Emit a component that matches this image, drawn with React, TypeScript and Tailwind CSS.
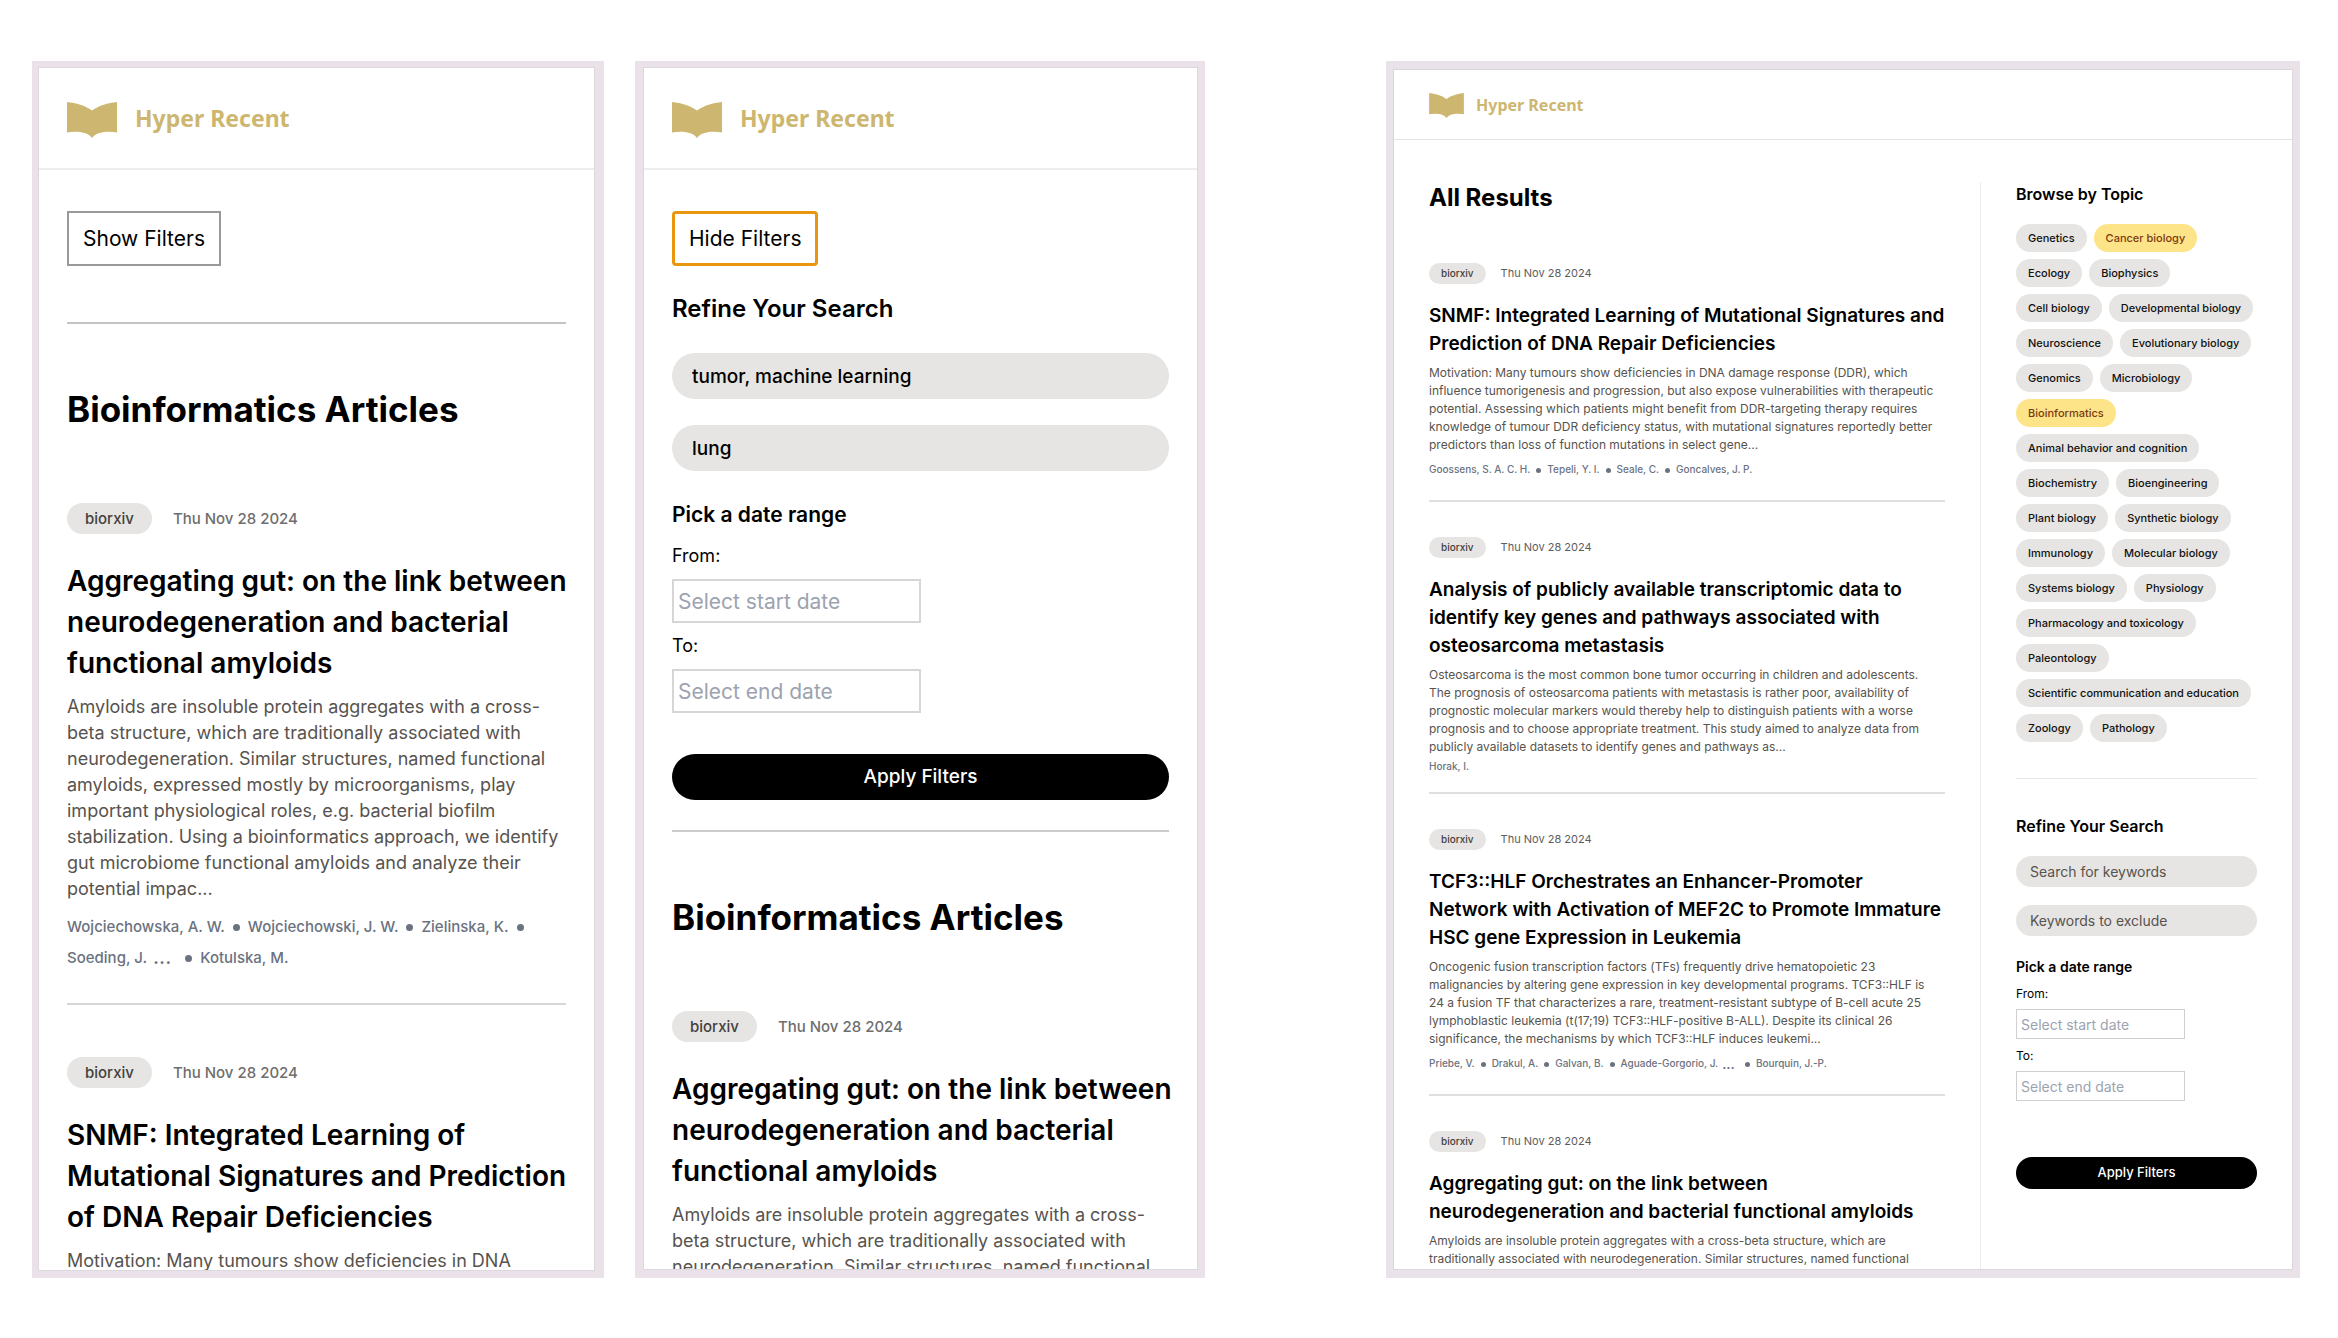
import React from "react";

type Paper = { title: string[]; abstract: string[]; authors: string[]; more?: number };
type Size = "phone" | "desktop";

const gutPhone: Paper = {
  title: ["Aggregating gut: on the link between", "neurodegeneration and bacterial", "functional amyloids"],
  abstract: [
    "Amyloids are insoluble protein aggregates with a cross-",
    "beta structure, which are traditionally associated with",
    "neurodegeneration. Similar structures, named functional",
    "amyloids, expressed mostly by microorganisms, play",
    "important physiological roles, e.g. bacterial biofilm",
    "stabilization. Using a bioinformatics approach, we identify",
    "gut microbiome functional amyloids and analyze their",
    "potential impac...",
  ],
  authors: ["Wojciechowska, A. W.", "Wojciechowski, J. W.", "Zielinska, K.", "Soeding, J.", "Kotulska, M."],
  more: 3,
};

const closedPapers: Paper[] = [
  gutPhone,
  {
    title: ["SNMF: Integrated Learning of", "Mutational Signatures and Prediction", "of DNA Repair Deficiencies"],
    abstract: ["Motivation: Many tumours show deficiencies in DNA"],
    authors: [],
  },
];

const openPapers: Paper[] = [{ title: gutPhone.title, abstract: gutPhone.abstract.slice(0, 3), authors: [] }];

const desktopPapers: Paper[] = [
  {
    title: ["SNMF: Integrated Learning of Mutational Signatures and", "Prediction of DNA Repair Deficiencies"],
    abstract: [
      "Motivation: Many tumours show deficiencies in DNA damage response (DDR), which",
      "influence tumorigenesis and progression, but also expose vulnerabilities with therapeutic",
      "potential. Assessing which patients might benefit from DDR-targeting therapy requires",
      "knowledge of tumour DDR deficiency status, with mutational signatures reportedly better",
      "predictors than loss of function mutations in select gene...",
    ],
    authors: ["Goossens, S. A. C. H.", "Tepeli, Y. I.", "Seale, C.", "Goncalves, J. P."],
  },
  {
    title: [
      "Analysis of publicly available transcriptomic data to",
      "identify key genes and pathways associated with",
      "osteosarcoma metastasis",
    ],
    abstract: [
      "Osteosarcoma is the most common bone tumor occurring in children and adolescents.",
      "The prognosis of osteosarcoma patients with metastasis is rather poor, availability of",
      "prognostic molecular markers would thereby help to distinguish patients with a worse",
      "prognosis and to choose appropriate treatment. This study aimed to analyze data from",
      "publicly available datasets to identify genes and pathways as...",
    ],
    authors: ["Horak, I."],
  },
  {
    title: [
      "TCF3::HLF Orchestrates an Enhancer-Promoter",
      "Network with Activation of MEF2C to Promote Immature",
      "HSC gene Expression in Leukemia",
    ],
    abstract: [
      "Oncogenic fusion transcription factors (TFs) frequently drive hematopoietic 23",
      "malignancies by altering gene expression in key developmental programs. TCF3::HLF is",
      "24 a fusion TF that characterizes a rare, treatment-resistant subtype of B-cell acute 25",
      "lymphoblastic leukemia (t(17;19) TCF3::HLF-positive B-ALL). Despite its clinical 26",
      "significance, the mechanisms by which TCF3::HLF induces leukemi...",
    ],
    authors: ["Priebe, V.", "Drakul, A.", "Galvan, B.", "Aguade-Gorgorio, J.", "Bourquin, J.-P."],
    more: 3,
  },
  {
    title: ["Aggregating gut: on the link between", "neurodegeneration and bacterial functional amyloids"],
    abstract: [
      "Amyloids are insoluble protein aggregates with a cross-beta structure, which are",
      "traditionally associated with neurodegeneration. Similar structures, named functional",
    ],
    authors: [],
  },
];

const topics = [
  "Genetics", "Cancer biology", "Ecology", "Biophysics", "Cell biology", "Developmental biology",
  "Neuroscience", "Evolutionary biology", "Genomics", "Microbiology", "Bioinformatics",
  "Animal behavior and cognition", "Biochemistry", "Bioengineering", "Plant biology",
  "Synthetic biology", "Immunology", "Molecular biology", "Systems biology", "Physiology",
  "Pharmacology and toxicology", "Paleontology", "Scientific communication and education",
  "Zoology", "Pathology",
];
const activeTopics = ["Cancer biology", "Bioinformatics"];

function Lines({ lines }: { lines: string[] }) {
  return (
    <>
      {lines.map((line, i) => (
        <React.Fragment key={i}>
          {i > 0 && <br />}
          {line}
        </React.Fragment>
      ))}
    </>
  );
}

function Brand({ size }: { size: Size }) {
  const phone = size === "phone";
  return (
    <a href="#home" className={phone ? "flex items-center gap-[18px]" : "flex items-center gap-3"}>
      <svg
        viewBox="0 0 50 36"
        className={phone ? "mt-1 h-9 w-[50px]" : "mt-[2px] h-[25px] w-[35px]"}
        fill="#cdb66f"
        aria-hidden="true"
      >
        <path d="M0 0C9 .8 18 3.600 25 8.500C32 3.600 41 .8 50 0V30.500C46 29.800 41 29.500 36 30.200C31 30.800 27.500 32.500 25 36C22.500 32.500 19 30.800 14 30.200C9 29.500 4 29.800 0 30.500Z" />
      </svg>
      <span
        className={
          phone
            ? "whitespace-nowrap font-['Noto_Sans',sans-serif] text-[23px]/[34px] font-bold text-[#cdb66f]"
            : "whitespace-nowrap font-['Noto_Sans',sans-serif] text-[16px]/[24px] font-bold text-[#cdb66f]"
        }
      >
        Hyper Recent
      </span>
    </a>
  );
}

function Article({ paper, size }: { paper: Paper; size: Size }) {
  const phone = size === "phone";
  const wide = paper.authors.length > 1;
  return (
    <article>
      <div className={phone ? "flex items-center gap-[21px]" : "flex items-center gap-[15px]"}>
        <span
          className={
            phone
              ? "rounded-full bg-[#e6e5e3] px-[18px] text-[15px]/[31px] font-medium text-[#44403c]"
              : "rounded-full bg-[#e6e5e3] px-3 text-[10px]/[21px] font-medium text-[#44403c]"
          }
        >
          biorxiv
        </span>
        <time
          dateTime="2024-11-28"
          className={
            phone ? "text-[15px]/[31px] font-medium text-[#6e6e6e]" : "text-[11px]/[21px] text-[#5c5c5c]"
          }
        >
          Thu Nov 28 2024
        </time>
      </div>
      <h2
        className={
          phone
            ? "mt-[27px] whitespace-nowrap text-[28px]/[41px] font-semibold"
            : "mt-[18px] whitespace-nowrap text-[19px]/[28px] font-semibold"
        }
      >
        <Lines lines={paper.title} />
      </h2>
      <p
        className={
          phone
            ? "mt-[10px] whitespace-nowrap text-[18px]/[26px] text-[#57534e]"
            : "mt-[6px] whitespace-nowrap text-[12px]/[18px] text-[#57534e]"
        }
      >
        <Lines lines={paper.abstract} />
      </p>
      {paper.authors.length > 0 && (
        <ul
          className={
            phone
              ? "mt-[9px] flex flex-wrap items-center text-[15px]/[31px] font-medium text-[#6b7280]"
              : wide
                ? "mt-[5px] flex flex-wrap items-center text-[10px]/[21px] font-medium text-[#6b7280]"
                : "mt-px flex flex-wrap items-center text-[10px]/[18px] font-medium text-[#6b7280]"
          }
        >
          {paper.authors.map((name, i) => (
            <li key={name} className="flex items-center whitespace-nowrap">
              {name}
              {paper.more === i && (
                <span className={phone ? "mx-[6px] text-[20px]/[31px]" : "mx-1 text-[14px]/[21px]"}>...</span>
              )}
              {i < paper.authors.length - 1 && (
                <span
                  className={
                    phone
                      ? "mx-[8px] mt-[2px] size-[7px] rounded-full bg-[#6b7280]"
                      : "mx-[6px] mt-[2px] size-[5px] rounded-full bg-[#6b7280]"
                  }
                />
              )}
            </li>
          ))}
        </ul>
      )}
    </article>
  );
}

function Articles({ papers, size }: { papers: Paper[]; size: Size }) {
  return (
    <>
      {papers.map((paper, i) => (
        <React.Fragment key={paper.title[0]}>
          {i > 0 && (
            <hr
              className={
                size === "phone"
                  ? "mt-[30px] mb-[52px] border-t-2 border-[#d6d6d6]"
                  : papers[i - 1].authors.length > 1
                    ? "mt-[20px] mb-[35px] border-t-2 border-[#dfdfdf]"
                    : "mt-[17px] mb-[35px] border-t-2 border-[#dfdfdf]"
              }
            />
          )}
          <Article paper={paper} size={size} />
        </React.Fragment>
      ))}
    </>
  );
}

function FilterForm({ size }: { size: Size }) {
  const phone = size === "phone";
  const keyword = phone
    ? "block h-[46px] w-full rounded-full bg-[#e6e5e3] px-5 text-[19px] font-medium text-black placeholder:text-[#57534e]"
    : "block h-[31px] w-full rounded-full bg-[#e6e5e3] px-[14px] text-[14px] text-black placeholder:text-[#57534e]";
  const label = phone ? "block text-[18px]/[26px]" : "block text-[12px]/[18px]";
  const date = phone
    ? "mt-[10px] block h-11 w-1/2 border-2 border-[#d6d6d6] px-1 text-[21px] placeholder:text-[#9ca3af]"
    : "mt-[6px] block h-[30px] w-[70%] border border-[#cfcfcf] px-1 text-[14px] placeholder:text-[#9ca3af]";
  return (
    <form onSubmit={(e) => e.preventDefault()}>
      <h2 className={phone ? "text-[24px]/[36px] font-semibold" : "text-[16px]/[24px] font-semibold"}>
        Refine Your Search
      </h2>
      <div className={phone ? "mt-[26px] flex flex-col gap-[26px]" : "mt-[18px] flex flex-col gap-[18px]"}>
        <input
          aria-label="Search for keywords"
          placeholder="Search for keywords"
          defaultValue={phone ? "tumor, machine learning" : ""}
          className={keyword}
        />
        <input
          aria-label="Keywords to exclude"
          placeholder="Keywords to exclude"
          defaultValue={phone ? "lung" : ""}
          className={keyword}
        />
      </div>
      <h3
        className={
          phone ? "mt-[26px] text-[21px]/[36px] font-semibold" : "mt-[19px] text-[14px]/[24px] font-semibold"
        }
      >
        Pick a date range
      </h3>
      <div className={phone ? "mt-[10px]" : "mt-[6px]"}>
        <label htmlFor={size + "-from"} className={label}>From:</label>
        <input id={size + "-from"} placeholder="Select start date" className={date} />
      </div>
      <div className={phone ? "mt-[10px]" : "mt-[8px]"}>
        <label htmlFor={size + "-to"} className={label}>To:</label>
        <input id={size + "-to"} placeholder="Select end date" className={date} />
      </div>
      <button
        type="submit"
        className={
          phone
            ? "mt-[41px] h-[46px] w-full rounded-full bg-black text-[19px] font-medium text-white"
            : "mt-[56px] h-8 w-full rounded-full bg-black text-[13px] font-medium text-white"
        }
      >
        Apply Filters
      </button>
    </form>
  );
}

function Phone({ open }: { open: boolean }) {
  return (
    <section
      aria-label={open ? "Articles with filters open" : "Articles"}
      className={
        open
          ? "min-h-0 bg-[#ebe2e9] pt-[7px] pr-2 pb-[9px] pl-[9px]"
          : "min-h-0 bg-[#ebe2e9] pt-[7px] pr-[10px] pb-2 pl-[7px]"
      }
    >
      <div className="flex h-full flex-col overflow-hidden bg-white outline-1 outline-[#dcd9de]">
        <header className="flex h-[102px] shrink-0 items-center border-b-2 border-[#ededed] px-7">
          <Brand size="phone" />
        </header>
        <main className="min-h-0 flex-1 px-7 pt-[41px]">
          <button
            type="button"
            aria-expanded={open}
            className={
              open
                ? "h-[55px] rounded-sm border-[3px] border-[#e8970f] px-[14px] text-[21px]"
                : "h-[55px] border-2 border-[#999999] px-[14px] text-[21px]"
            }
          >
            {open ? "Hide Filters" : "Show Filters"}
          </button>
          {open && (
            <div className="mt-[25px]">
              <FilterForm size="phone" />
            </div>
          )}
          <hr className={open ? "mt-[30px] border-t-2 border-[#cccccc]" : "mt-[56px] border-t-2 border-[#c4c4c4]"} />
          <h1 className="mt-[61px] mb-[70px] whitespace-nowrap text-[35px]/[48px] font-bold">
            Bioinformatics Articles
          </h1>
          <Articles papers={open ? openPapers : closedPapers} size="phone" />
        </main>
      </div>
    </section>
  );
}

function Desktop() {
  return (
    <section aria-label="All results" className="min-h-0 bg-[#e9e2e9] pt-[9px] pr-2 pb-[9px] pl-2">
      <div className="flex h-full flex-col overflow-hidden bg-white outline-1 outline-[#d9d6dc]">
        <header className="flex h-[70px] shrink-0 items-center border-b border-[#e2e2e2] px-[35px]">
          <Brand size="desktop" />
        </header>
        <div className="grid min-h-0 flex-1 grid-cols-[minmax(0,516fr)_minmax(0,277fr)] grid-rows-[minmax(0,1fr)] gap-[35px] px-[35px] pt-[42px]">
          <main>
            <h1 className="mb-[49px] text-[24px]/[32px] font-bold">All Results</h1>
            <Articles papers={desktopPapers} size="desktop" />
          </main>
          <aside className="border-l border-[#ededed] pl-[35px]">
            <h2 className="text-[16px]/[24px] font-semibold">Browse by Topic</h2>
            <ul className="mt-[18px] flex flex-wrap gap-[7px]">
              {topics.map((topic) => (
                <li key={topic}>
                  <button
                    type="button"
                    aria-pressed={activeTopics.includes(topic)}
                    className={
                      activeTopics.includes(topic)
                        ? "block h-7 rounded-full bg-[#fde488] px-3 text-[11px] font-medium text-[#7c3a10]"
                        : "block h-7 rounded-full bg-[#e6e5e3] px-3 text-[11px] font-medium text-[#111111]"
                    }
                  >
                    {topic}
                  </button>
                </li>
              ))}
            </ul>
            <hr className="mt-[36px] mb-[35px] border-t border-[#e5e5e5]" />
            <FilterForm size="desktop" />
          </aside>
        </div>
      </div>
    </section>
  );
}

export default function App() {
  return (
    <div className="grid h-screen grid-cols-[minmax(0,1173fr)_minmax(0,914fr)] grid-rows-[minmax(0,1fr)] gap-[181px] bg-white pt-[61px] pr-[38px] pb-[60px] pl-8 font-['Inter',sans-serif] text-black">
      <div className="grid grid-cols-[minmax(0,572fr)_minmax(0,570fr)] grid-rows-[minmax(0,1fr)] gap-[31px]">
        <Phone open={false} />
        <Phone open />
      </div>
      <Desktop />
    </div>
  );
}
